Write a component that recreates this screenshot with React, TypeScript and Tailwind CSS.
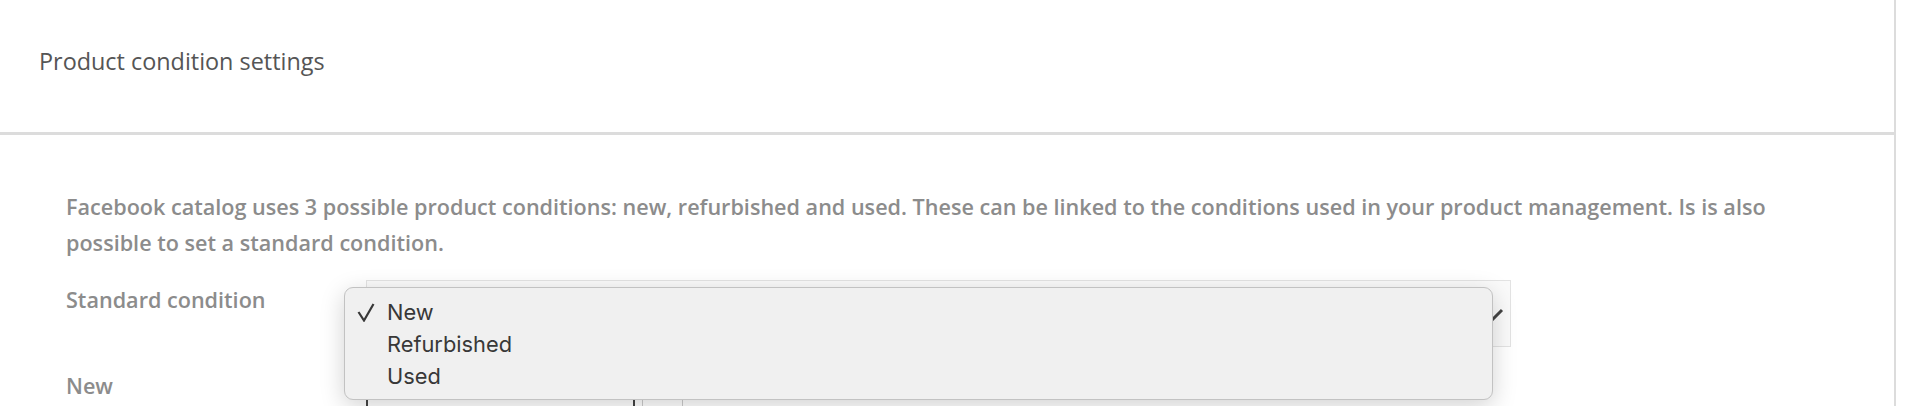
import React from "react";

export default function App() {
  return (
    <div className="relative w-[1912px] h-[406px] overflow-hidden bg-white" style={{ fontFamily: '"Open Sans", "Liberation Sans", sans-serif' }}>
      <div className="w-[1896px] h-full border-r-2 border-[#dcdcdc]">
        <div className="h-[135px] border-b-[3px] border-[#dcdcdc] flex items-center pl-[39px] pb-[9px]">
          <span className="text-[23.4px] text-[#555555]">Product condition settings</span>
        </div>
        <div className="pl-[66px] pt-[54px]">
          <p className="w-[1740px] text-[21.6px] leading-[36px] font-semibold text-[#8c8c8c]">
            Facebook catalog uses 3 possible product conditions: new, refurbished and used. These can be linked to the conditions used in your product management. Is is also possible to set a standard condition.
          </p>
          <div className="mt-[19px] flex items-start">
            <div className="w-[300px] text-[21.6px] leading-[40px] font-semibold text-[#8c8c8c]">Standard condition</div>
            <div className="w-[1145px] h-[67px] border border-[#e3e3e3] bg-[#fafafa] flex items-center justify-end pr-[6px]">
              <svg width="24" height="14" viewBox="0 0 24 14" className="mt-[3px]">
                <path d="M2 2 L12 12 L22 2" fill="none" stroke="#444" strokeWidth="3" />
              </svg>
            </div>
          </div>
          <div className="mt-[19px] flex items-start">
            <div className="w-[300px] text-[21.6px] leading-[40px] font-semibold text-[#8c8c8c]">New</div>
            <div className="w-[269px] h-[67px] border-2 border-[#444] bg-white" />
            <div className="ml-[7px] w-[41px] h-[67px] border border-[#cccccc] bg-white" />
          </div>
        </div>
      </div>

      <div
        className="absolute left-[344px] top-[287px] w-[1149px] h-[113px] rounded-[9px] border border-[#c2c2c2] bg-[#f0f0f0] shadow-[0_6px_24px_rgba(0,0,0,0.18)] py-[8px]"
        style={{ fontFamily: 'Inter, "Liberation Sans", sans-serif' }}
      >
        {[
          { label: "New", checked: true },
          { label: "Refurbished", checked: false },
          { label: "Used", checked: false },
        ].map((it) => (
          <div key={it.label} className="flex items-center h-[32px] text-[21.8px] text-[#383838]">
            <div className="w-[42px] flex justify-end pr-[12px]">
              {it.checked && (
                <svg width="18" height="19" viewBox="0 0 18 19">
                  <path d="M1.5 9 L7 17.5 L16.5 1" fill="none" stroke="#383838" strokeWidth="2.2" />
                </svg>
              )}
            </div>
            <span>{it.label}</span>
          </div>
        ))}
      </div>
    </div>
  );
}
